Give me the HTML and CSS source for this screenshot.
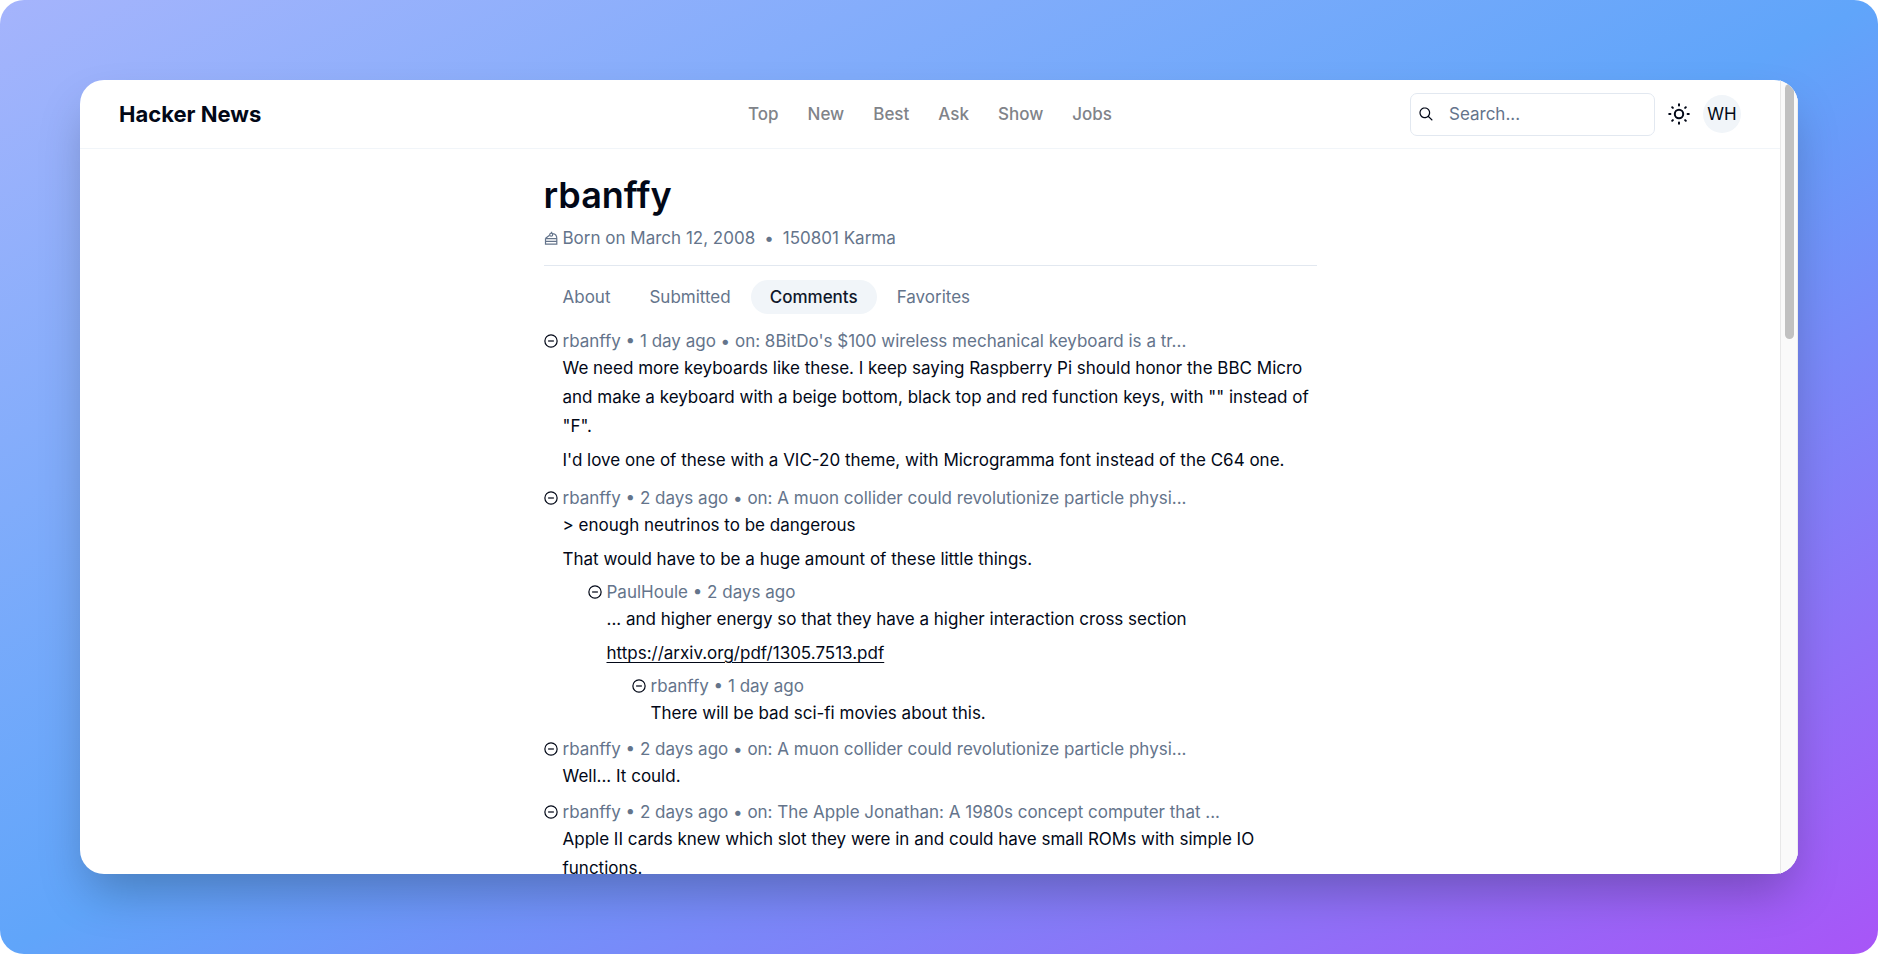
FILE: index.html
```html
<!DOCTYPE html>
<html lang="en">
<head>
<meta charset="utf-8">
<title>Hacker News – rbanffy</title>
<link rel="stylesheet" href="styles.css">
</head>
<body>
<svg class="sprite" aria-hidden="true">
  <symbol id="minus" viewBox="0 0 16 16"><circle cx="8" cy="8" r="7"/><path d="M4.7 8h6.6"/></symbol>
</svg>
<div class="backdrop">
  <div class="window">
    <div class="page">
      <header class="header">
        <a class="brand" href="#">Hacker News</a>
        <nav class="nav">
          <a href="#">Top</a><a href="#">New</a><a href="#">Best</a><a href="#">Ask</a><a href="#">Show</a><a href="#">Jobs</a>
        </nav>
        <div class="tools">
          <label class="search">
            <svg class="search-icon" viewBox="0 0 15 15" aria-hidden="true"><path fill="currentColor" fill-rule="evenodd" d="M10 6.5a3.5 3.5 0 1 1-7 0 3.5 3.5 0 0 1 7 0Zm-.69 3.52a4.5 4.5 0 1 1 .71-.71l2.83 2.84a.5.5 0 0 1-.7.7L9.3 10.02Z"/></svg>
            <input type="text" placeholder="Search..." aria-label="Search">
          </label>
          <button class="theme" type="button" aria-label="Toggle theme">
            <svg viewBox="0 0 24 24" aria-hidden="true"><circle cx="12" cy="12" r="4.2"/><path d="M12 2.2v1.2M12 20.6v1.2M2.2 12h1.2M20.6 12h1.2M5.2 5.2l.7 .7M18.1 18.1l.7 .7M5.2 18.8l.7-.7M18.1 5.9l.7-.7"/></svg>
          </button>
          <button class="avatar" type="button">WH</button>
        </div>
      </header>
      <main class="main">
        <h1 class="title">rbanffy</h1>
        <p class="facts">
          <svg class="cake" viewBox="0 0 14 14" aria-hidden="true"><path d="M1.5 7.2v6h11.3V7.2M1.5 7.6h11.3M1.5 10.4h11.3M1.6 7.2 5.6 4.2M8.6 2.6c2.6.1 4.2 2 4.2 5M7.6 .8v1.4"/><circle cx="7.2" cy="3.7" r="1.5"/></svg>
          <span>Born on March 12, 2008</span><span class="dot">•</span><span>150801 Karma</span>
        </p>
        <nav class="tabs">
          <a href="#">About</a><a href="#">Submitted</a><a class="active" href="#">Comments</a><a href="#">Favorites</a>
        </nav>

        <article class="comment">
          <div class="meta"><button type="button" aria-label="Collapse"><svg><use href="#minus"/></svg></button><span>rbanffy • 1 day ago • on: 8BitDo's $100 wireless mechanical keyboard is a tr...</span></div>
          <div class="body">
            <p>We need more keyboards like these. I keep saying Raspberry Pi should honor the BBC Micro and make a keyboard with a beige bottom, black top and red function keys, with "" instead of "F".</p>
            <p>I'd love one of these with a VIC-20 theme, with Microgramma font instead of the C64 one.</p>
          </div>
        </article>

        <article class="comment">
          <div class="meta"><button type="button" aria-label="Collapse"><svg><use href="#minus"/></svg></button><span>rbanffy • 2 days ago • on: A muon collider could revolutionize particle physi...</span></div>
          <div class="body">
            <p>&gt; enough neutrinos to be dangerous</p>
            <p>That would have to be a huge amount of these little things.</p>
            <article class="reply">
              <div class="meta"><button type="button" aria-label="Collapse"><svg><use href="#minus"/></svg></button><span>PaulHoule • 2 days ago</span></div>
              <div class="body">
                <p>... and higher energy so that they have a higher interaction cross section</p>
                <p><a href="#">https://arxiv.org/pdf/1305.7513.pdf</a></p>
                <article class="reply">
                  <div class="meta"><button type="button" aria-label="Collapse"><svg><use href="#minus"/></svg></button><span>rbanffy • 1 day ago</span></div>
                  <div class="body">
                    <p>There will be bad sci-fi movies about this.</p>
                  </div>
                </article>
              </div>
            </article>
          </div>
        </article>

        <article class="comment">
          <div class="meta"><button type="button" aria-label="Collapse"><svg><use href="#minus"/></svg></button><span>rbanffy • 2 days ago • on: A muon collider could revolutionize particle physi...</span></div>
          <div class="body"><p>Well... It could.</p></div>
        </article>

        <article class="comment">
          <div class="meta"><button type="button" aria-label="Collapse"><svg><use href="#minus"/></svg></button><span>rbanffy • 2 days ago • on: The Apple Jonathan: A 1980s concept computer that ...</span></div>
          <div class="body"><p>Apple II cards knew which slot they were in and could have small ROMs with simple IO functions.</p></div>
        </article>
      </main>
    </div>
    <div class="scrollbar"><div class="thumb"></div></div>
  </div>
</div>
</body>
</html>
```
FILE: styles.css
```css
* { box-sizing: border-box; }
body {
  margin: 0;
  background: #fff;
  color: #020817;
  font: 17px/24px Inter, "Liberation Sans", sans-serif;
}
a { color: inherit; text-decoration: none; }
button { padding: 0; border: 0; background: none; color: inherit; font: inherit; }
p { margin: 0; }
.sprite { position: absolute; width: 0; height: 0; }

.backdrop {
  display: flex;
  height: 100vh;
  padding: 80px;
  border-radius: 24px;
  background: linear-gradient(to bottom right, #a5b4fc, #60a5fa, #a855f7);
}
.window {
  display: flex;
  flex: 1;
  min-width: 0;
  overflow: hidden;
  border-radius: 24px;
  background: #fff;
  box-shadow: 0 24px 48px -8px rgba(0, 0, 0, 0.25);
}
.page { flex: 1; min-width: 0; overflow: hidden; }

.header {
  display: grid;
  grid-template-columns: 1fr auto 1fr;
  align-items: center;
  height: 69px;
  padding: 0 39px;
  border-bottom: 1px solid #f1f5f9;
}
.brand { font-size: 22px; font-weight: 700; }
.nav { display: flex; gap: 29px; color: #808389; font-weight: 500; }
.tools { display: flex; align-items: center; justify-content: flex-end; gap: 12px; }
.search {
  display: flex;
  align-items: center;
  width: 245px;
  height: 43px;
  padding: 0 6px;
  gap: 14px;
  border: 1px solid #e2e8f0;
  border-radius: 7px;
}
.search-icon { flex: none; width: 18px; height: 18px; }
.search input {
  flex: 1;
  min-width: 0;
  padding: 0;
  border: 0;
  outline: 0;
  background: none;
  color: inherit;
  font: inherit;
}
.search input::placeholder { color: #64748b; opacity: 1; }
.theme { display: flex; }
.theme svg {
  width: 24px;
  height: 24px;
  fill: none;
  stroke: currentColor;
  stroke-width: 2;
  stroke-linecap: round;
}
.avatar {
  width: 38px;
  height: 38px;
  border-radius: 50%;
  background: #f1f5f9;
  text-align: center;
}

.main { max-width: 773px; margin: 0 auto; padding-top: 24px; }
.title { margin: 0; font-size: 36px; line-height: 44px; font-weight: 600; }
.facts {
  display: flex;
  align-items: center;
  padding: 9px 0 15px;
  border-bottom: 1px solid #e2e8f0;
  color: #64748b;
}
.dot { margin: 0 9px; }
.cake {
  width: 14px;
  height: 14px;
  margin-right: 5px;
  fill: none;
  stroke: currentColor;
  stroke-width: 1.2;
}
.tabs { display: flex; gap: 1px; margin: 14px 0 15px; color: #64748b; }
.tabs a { padding: 5px 19px; border-radius: 17px; }
.tabs .active { background: #f1f5f9; color: #0f172a; font-weight: 500; }

.comment { margin-bottom: 9px; }
.meta { display: flex; align-items: center; gap: 5px; color: #64748b; }
.meta button { display: flex; color: #020817; }
.meta svg { width: 14px; height: 14px; fill: none; stroke: currentColor; stroke-width: 1.4; }
.body { padding: 1px 0 0 19px; line-height: 29px; }
.body p + p { margin-top: 5px; }
.body p + p:last-child { margin-bottom: 11px; }
.body .meta { line-height: 24px; }
.body a { text-decoration: underline; text-underline-offset: 3px; }
.reply { margin: 6px 0 0 25px; }

.scrollbar {
  width: 18px;
  padding: 4px 3px 0 4px;
  border-left: 1px solid #e8e8e8;
  border-right: 1px solid #ededed;
  background: #fafafa;
}
.thumb { height: 255px; border-radius: 5px; background: #c1c1c1; }
```
